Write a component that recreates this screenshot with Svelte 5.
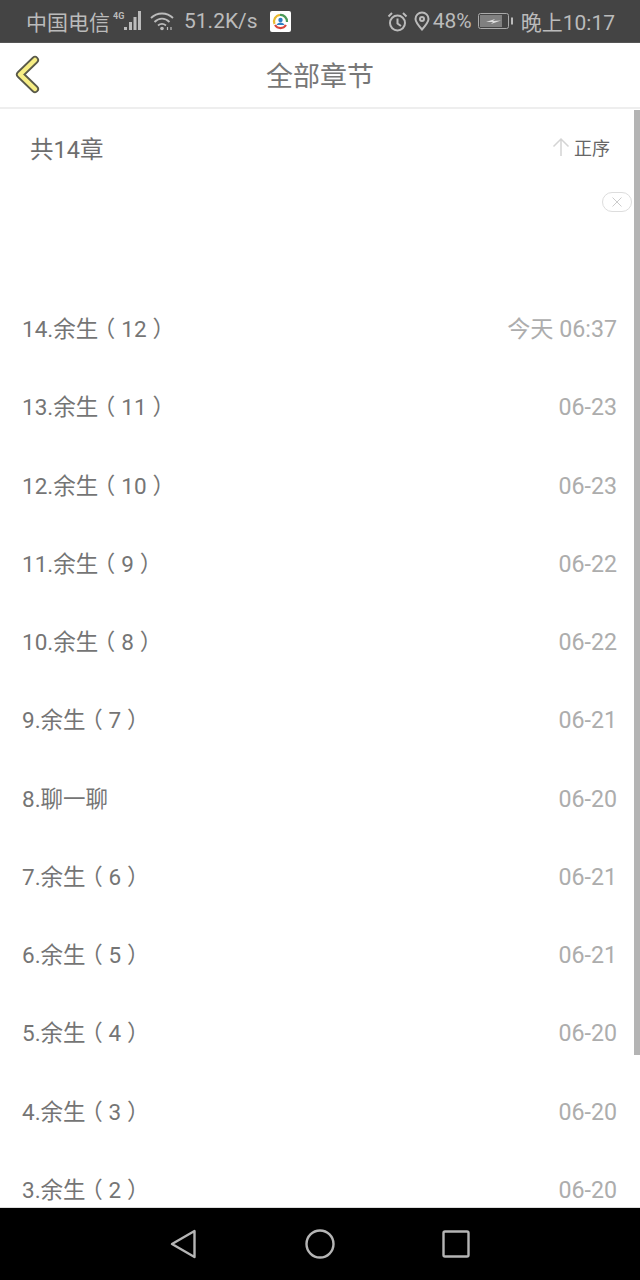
<script>
  const chapters = [
    { no: '14.', name: '余生', part: '12', date: '今天 06:37' },
    { no: '13.', name: '余生', part: '11', date: '06-23' },
    { no: '12.', name: '余生', part: '10', date: '06-23' },
    { no: '11.', name: '余生', part: '9', date: '06-22' },
    { no: '10.', name: '余生', part: '8', date: '06-22' },
    { no: '9.', name: '余生', part: '7', date: '06-21' },
    { no: '8.', name: '聊一聊', part: '', date: '06-20' },
    { no: '7.', name: '余生', part: '6', date: '06-21' },
    { no: '6.', name: '余生', part: '5', date: '06-21' },
    { no: '5.', name: '余生', part: '4', date: '06-20' },
    { no: '4.', name: '余生', part: '3', date: '06-20' },
    { no: '3.', name: '余生', part: '2', date: '06-20' }
  ];
</script>

<div class="screen">
  <!-- Status bar -->
  <div class="status">
    <div class="status-left">
      <span>中国电信</span>
      <svg class="signal" width="33" height="22" viewBox="0 0 33 22">
        <text x="0" y="9" class="net">4G</text>
        <rect x="11" y="17" width="3" height="3" fill="#bbb" />
        <rect x="16" y="12" width="3" height="8" fill="#bbb" />
        <rect x="20.500" y="7" width="3" height="13" fill="#bbb" />
        <rect x="25" y="1" width="3" height="19" fill="#bbb" />
      </svg>
      <svg class="wifi" width="24" height="20" viewBox="0 0 24 20" fill="none" stroke="#bbb" stroke-width="1.800">
        <path d="M1 7 C7 1 17 1 23 7" />
        <path d="M4.500 11 C9 6.500 15 6.500 19.500 11" />
        <path d="M8 14.500 C10.500 12.500 13.500 12.500 16 14.500" />
        <circle cx="12" cy="17.500" r="1.800" fill="#bbb" stroke="none" />
        <path d="M17.500 16 V19 M21 16 V19" stroke-width="1.200" />
      </svg>
      <span class="speed">51.2K/s</span>
      <svg class="app" width="21" height="21" viewBox="0 0 21 21">
        <rect width="21" height="21" rx="2" fill="#fff" />
        <path d="M4.500 13 A6.500 6.500 0 0 1 10 4" fill="none" stroke="#e9b92f" stroke-width="2.200" />
        <path d="M10 4 A6.500 6.500 0 0 1 17 11" fill="none" stroke="#4c9a58" stroke-width="2.200" />
        <path d="M5 14 A6.500 6.500 0 0 0 16 14" fill="none" stroke="#d9453b" stroke-width="2.200" />
        <circle cx="10.500" cy="9" r="2.200" fill="#2f7fc4" />
        <path d="M6.500 14 C7.500 10.500 13.500 10.500 14.500 14 Z" fill="#2f7fc4" />
      </svg>
    </div>
    <div class="status-right">
      <svg width="21" height="21" viewBox="0 0 21 21" fill="none" stroke="#bbb" stroke-width="2">
        <circle cx="10.500" cy="12" r="7.500" />
        <path d="M10.500 7.500 V12.500 L14 15" />
        <path d="M1.500 5.500 L5 2 M19.500 5.500 L16 2" />
      </svg>
      <svg class="pin" width="16" height="20" viewBox="0 0 16 20" fill="none" stroke="#bbb" stroke-width="2">
        <path d="M8 18.500 C4 14 1.500 11 1.500 8 A6.500 6.500 0 0 1 14.500 8 C14.500 11 12 14 8 18.500 Z" />
        <circle cx="8" cy="8" r="2" />
      </svg>
      <span class="pct">48%</span>
      <svg class="battery" width="36" height="18" viewBox="0 0 36 18">
        <rect x="0.500" y="1.500" width="30" height="15" rx="2" fill="none" stroke="#aaa" />
        <rect x="2" y="3" width="22" height="12" fill="#808080" />
        <path d="M8 10 L17 7 L15 9 L23 8.500 L13 12 L15 10 Z" fill="#ddd" />
        <rect x="33" y="5.500" width="2" height="7" fill="#bbb" />
      </svg>
      <span class="clock">晚上10:17</span>
    </div>
  </div>

  <!-- Header -->
  <header class="header">
    <svg class="back" width="26" height="40" viewBox="0 0 26 40">
      <path d="M20 5 L5 19.500 L20 34" fill="none" stroke="#5a5a4a" stroke-width="8" stroke-linecap="round" stroke-linejoin="round" />
      <path d="M20 5 L5 19.500 L20 34" fill="none" stroke="#f7ee84" stroke-width="4.500" stroke-linecap="round" stroke-linejoin="round" />
    </svg>
    <h1>全部章节</h1>
  </header>

  <main class="body">
    <div class="summary">
      <span class="count">共14章</span>
      <span class="order">
        <svg width="18" height="20" viewBox="0 0 18 20" fill="none" stroke="#d4d4d4" stroke-width="1.500">
          <path d="M9 19 V2 M1.500 9.500 L9 2 L16.500 9.500" />
        </svg>
        正序
      </span>
    </div>

    <div class="ad-close">
      <span class="pill">
        <svg width="10" height="10" viewBox="0 0 10 10" stroke="#ccc" stroke-width="1">
          <path d="M0.500 0.500 L9.500 9.500 M9.500 0.500 L0.500 9.500" />
        </svg>
      </span>
    </div>

    <ul class="list">
      {#each chapters as c}
        <li>
          <span class="title">{c.no}{c.name}{#if c.part}<span class="paren">（</span>{c.part}<span class="paren">）</span>{/if}</span>
          <span class="date">{c.date}</span>
        </li>
      {/each}
    </ul>

    <div class="scrollbar"></div>
  </main>

  <!-- Nav bar -->
  <nav class="nav">
    <svg width="28" height="30" viewBox="0 0 28 30" fill="none" stroke="#b5b5b5" stroke-width="2.400" stroke-linejoin="round">
      <path d="M24.500 2 V28 L2 15 Z" />
    </svg>
    <svg width="30" height="30" viewBox="0 0 30 30" fill="none" stroke="#b5b5b5" stroke-width="2.400">
      <circle cx="15" cy="15" r="13.500" />
    </svg>
    <svg width="28" height="28" viewBox="0 0 28 28" fill="none" stroke="#b5b5b5" stroke-width="2.400" stroke-linejoin="round">
      <rect x="1.500" y="1.500" width="25" height="25" rx="1.500" />
    </svg>
  </nav>
</div>

<style>
  :global(body) {
    margin: 0;
    background: #fff;
  }

  .screen {
    width: 640px;
    height: 1280px;
    display: flex;
    flex-direction: column;
    overflow: hidden;
    font-family: Roboto, "Noto Sans CJK SC", sans-serif;
  }

  .status {
    height: 42px;
    flex-shrink: 0;
    background: #444;
    color: #bbb;
    font-size: 21px;
    display: flex;
    align-items: center;
    justify-content: space-between;
    padding: 0 25px 0 26px;
    border-bottom: 1px solid #555;
  }

  .status-left,
  .status-right {
    display: flex;
    align-items: center;
  }

  .signal {
    margin-left: 3px;
  }

  .net {
    font-size: 9px;
    font-weight: 700;
    fill: #bbb;
  }

  .wifi {
    margin-left: 4px;
  }

  .speed {
    margin-left: 10px;
  }

  .app {
    margin-left: 12px;
  }

  .pin {
    margin-left: 6px;
  }

  .pct {
    margin-left: 3px;
  }

  .battery {
    margin-left: 6px;
  }

  .clock {
    margin-left: 7px;
  }

  .header {
    height: 66px;
    flex-shrink: 0;
    position: relative;
    display: flex;
    align-items: center;
    justify-content: center;
    padding-bottom: 2px;
    box-sizing: border-box;
    border-bottom: 2px solid #eee;
  }

  .back {
    position: absolute;
    left: 15px;
    top: 12px;
  }

  h1 {
    margin: 0;
    font-size: 27px;
    font-weight: 400;
    color: #777;
  }

  .body {
    flex: 1;
    min-height: 0;
    position: relative;
    overflow: hidden;
  }

  .summary {
    height: 78px;
    display: flex;
    align-items: center;
    justify-content: space-between;
    padding: 0 30px;
  }

  .count {
    font-size: 23.500px;
    color: #6e6e6e;
  }

  .order {
    display: flex;
    align-items: center;
    gap: 4px;
    font-size: 18px;
    margin-bottom: 2px;
    color: #666;
  }

  .ad-close {
    height: 101px;
    display: flex;
    justify-content: flex-end;
    align-items: flex-start;
    padding: 5px 8px 0 0;
    box-sizing: border-box;
  }

  .pill {
    width: 30px;
    height: 20px;
    box-sizing: border-box;
    border: 1px solid #ddd;
    border-radius: 10px;
    display: flex;
    align-items: center;
    justify-content: center;
  }

  .list {
    margin: 0;
    padding: 0 23px 0 22px;
    list-style: none;
  }

  li {
    height: 78.27px;
    box-sizing: border-box;
    display: flex;
    align-items: baseline;
    justify-content: space-between;
    padding-top: 25px;
    font-size: 22.500px;
    line-height: 32px;
  }

  .title {
    color: #757575;
  }

  .paren {
    display: inline-block;
    width: 23px;
    text-align: center;
    font-feature-settings: "halt";
  }

  .date {
    font-size: 23.200px;
    color: #adadad;
  }

  .scrollbar {
    position: absolute;
    right: 0;
    top: 1px;
    width: 6px;
    height: 945px;
    background: #b4b4b4;
  }

  .nav {
    height: 72px;
    flex-shrink: 0;
    background: #000;
    display: grid;
    grid-template-columns: repeat(3, 136px);
    justify-content: center;
    justify-items: center;
    align-items: center;
    box-shadow: 0 -1px 0 #ddd;
  }
</style>
